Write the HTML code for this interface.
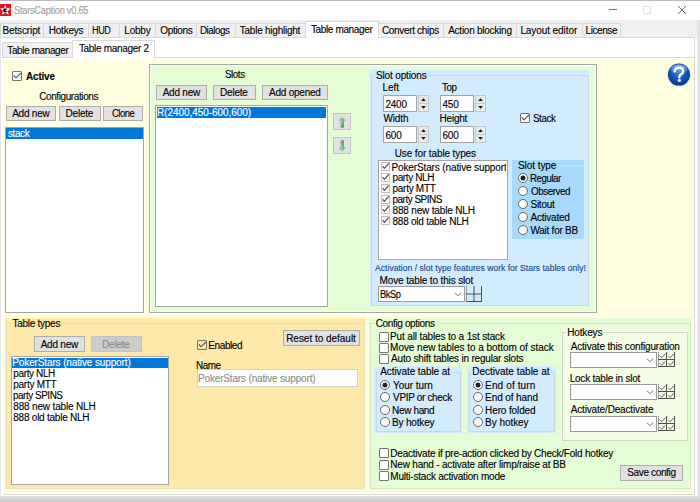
<!DOCTYPE html>
<html><head><meta charset="utf-8"><style>
html,body{margin:0;padding:0;width:700px;height:502px;overflow:hidden;background:#fff;}
body{position:relative;font-family:"Liberation Sans",sans-serif;font-size:10.0px;color:#000;}
.a{position:absolute;box-sizing:border-box;}
.t{position:absolute;white-space:nowrap;line-height:12px;-webkit-text-stroke:0.12px currentColor;}
svg.a{overflow:visible}
</style></head><body>
<div class="a" style="left:0px;top:0px;width:700px;height:1px;background:#bcbcbc;"></div>
<svg class="a" style="left:0;top:0" width="12" height="17"><rect x="0" y="4" width="11" height="12" fill="#e5141c"/><path d="M5.30 4.60 L6.77 8.18 L10.63 8.47 L7.68 10.97 L8.59 14.73 L5.30 12.70 L2.01 14.73 L2.92 10.97 L-0.03 8.47 L3.83 8.18Z" fill="#fff"/><circle cx="5.2" cy="10.4" r="2.1" fill="#111"/><rect x="5.6" y="9.8" width="1.8" height="1.1" fill="#fff"/></svg>
<div class="t" style="left:14px;top:4px;font-size:10.5px;color:#a0a0a0;letter-spacing:-0.3px;transform:scaleX(0.885);transform-origin:0 0;">StarsCaption v0.65</div>
<div class="a" style="left:609px;top:9px;width:8px;height:1px;background:#707070;"></div>
<div class="a" style="left:643px;top:6px;width:8px;height:8px;box-shadow:inset 0 0 0 1px #e0e0e0;"></div>
<svg class="a" style="left:677px;top:5px" width="10" height="10"><path d="M1 1 L9 9 M9 1 L1 9" stroke="#6a6a6a" stroke-width="1"/></svg>
<div class="a" style="left:0px;top:20px;width:700px;height:17px;background:#f0f0f0;"></div>
<div class="a" style="left:697px;top:20px;width:3px;height:482px;background:#e4e4e4;"></div>
<div class="a" style="left:0px;top:20px;width:1px;height:482px;background:#e6e6e6;"></div>
<div class="a" style="left:1px;top:37px;width:696px;height:460px;background:#ffffff;"></div>
<div class="a" style="left:1px;top:37px;width:694px;height:1px;background:#d9d9d9;"></div>
<div class="a" style="left:694px;top:37px;width:1px;height:458px;background:#d9d9d9;"></div>
<div class="a" style="left:0px;top:23px;width:44px;height:15px;background:#f0f0f0;box-shadow:inset 0 0 0 1px #d9d9d9;"></div>
<div class="t" style="left:2.4px;top:25px;letter-spacing:-0.112px;">Betscript</div>
<div class="a" style="left:43px;top:23px;width:46px;height:15px;background:#f0f0f0;box-shadow:inset 0 0 0 1px #d9d9d9;"></div>
<div class="t" style="left:48.8px;top:25px;letter-spacing:-0.233px;">Hotkeys</div>
<div class="a" style="left:88px;top:23px;width:32px;height:15px;background:#f0f0f0;box-shadow:inset 0 0 0 1px #d9d9d9;"></div>
<div class="t" style="left:91.69px;top:25px;transform:scaleX(0.9104);transform-origin:0 0;letter-spacing:-0.45px;">HUD</div>
<div class="a" style="left:119px;top:23px;width:37px;height:15px;background:#f0f0f0;box-shadow:inset 0 0 0 1px #d9d9d9;"></div>
<div class="t" style="left:124.3px;top:25px;letter-spacing:-0.225px;">Lobby</div>
<div class="a" style="left:155px;top:23px;width:42px;height:15px;background:#f0f0f0;box-shadow:inset 0 0 0 1px #d9d9d9;"></div>
<div class="t" style="left:160.3px;top:25px;letter-spacing:-0.333px;">Options</div>
<div class="a" style="left:196px;top:23px;width:40px;height:15px;background:#f0f0f0;box-shadow:inset 0 0 0 1px #d9d9d9;"></div>
<div class="t" style="left:200.42px;top:25px;transform:scaleX(0.9761);transform-origin:0 0;letter-spacing:-0.45px;">Dialogs</div>
<div class="a" style="left:235px;top:23px;width:71px;height:15px;background:#f0f0f0;box-shadow:inset 0 0 0 1px #d9d9d9;"></div>
<div class="t" style="left:239.8px;top:25px;letter-spacing:-0.243px;">Table highlight</div>
<div class="a" style="left:378px;top:23px;width:66px;height:15px;background:#f0f0f0;box-shadow:inset 0 0 0 1px #d9d9d9;"></div>
<div class="t" style="left:381.9px;top:25px;letter-spacing:-0.325px;">Convert chips</div>
<div class="a" style="left:443px;top:23px;width:74px;height:15px;background:#f0f0f0;box-shadow:inset 0 0 0 1px #d9d9d9;"></div>
<div class="t" style="left:448.2px;top:25px;letter-spacing:-0.25px;">Action blocking</div>
<div class="a" style="left:516px;top:23px;width:67px;height:15px;background:#f0f0f0;box-shadow:inset 0 0 0 1px #d9d9d9;"></div>
<div class="t" style="left:520.4px;top:25px;letter-spacing:-0.083px;">Layout editor</div>
<div class="a" style="left:582px;top:23px;width:39px;height:15px;background:#f0f0f0;box-shadow:inset 0 0 0 1px #d9d9d9;"></div>
<div class="t" style="left:585.6px;top:25px;letter-spacing:-0.433px;">License</div>
<div class="a" style="left:305px;top:21px;width:74px;height:17px;background:#ffffff;box-shadow:inset 0 0 0 1px #d9d9d9;"></div>
<div class="a" style="left:306px;top:37px;width:72px;height:2px;background:#ffffff;"></div>
<div class="t" style="left:310.9px;top:24px;letter-spacing:-0.358px;">Table manager</div>
<div class="a" style="left:2px;top:42px;width:71px;height:16px;background:#f0f0f0;box-shadow:inset 0 0 0 1px #d9d9d9;"></div>
<div class="t" style="left:7.3px;top:45px;letter-spacing:-0.392px;">Table manager</div>
<div class="a" style="left:72px;top:40px;width:83px;height:18px;background:#ffffff;box-shadow:inset 0 0 0 1px #d9d9d9;"></div>
<div class="t" style="left:78.9px;top:43px;letter-spacing:-0.307px;">Table manager 2</div>
<div class="a" style="left:2px;top:57px;width:693px;height:438px;background:#ffffff;box-shadow:inset 0 0 0 1px #d9d9d9;"></div>
<div class="a" style="left:2px;top:58px;width:1px;height:437px;background:#ffffff;"></div>
<div class="a" style="left:73px;top:57px;width:81px;height:2px;background:#ffffff;"></div>
<div class="a" style="left:3px;top:59px;width:691px;height:434px;background:#ffffe0;"></div>
<div class="a" style="left:0px;top:496px;width:700px;height:6px;background:linear-gradient(#e8e8e8,#d8d8d8 30%,#c9c9c9);"></div>
<svg class="a" style="left:667px;top:63px" width="24" height="24"><defs><radialGradient id="hg" cx="50%" cy="40%" r="62%"><stop offset="0" stop-color="#2f7ad8"/><stop offset="0.55" stop-color="#1456b8"/><stop offset="0.85" stop-color="#0b3f96"/><stop offset="1" stop-color="#0a3580"/></radialGradient><linearGradient id="hh" x1="0" x2="0" y1="0" y2="1"><stop offset="0" stop-color="#fff" stop-opacity="0.55"/><stop offset="1" stop-color="#fff" stop-opacity="0"/></linearGradient></defs><circle cx="12" cy="12" r="11.8" fill="#a8d6f4" opacity="0.55"/><circle cx="12" cy="11.6" r="11" fill="url(#hg)"/><ellipse cx="12" cy="6.6" rx="8.2" ry="5.2" fill="url(#hh)"/><path d="M7.7 8.3 Q8.1 4.7 12 4.7 Q16.1 4.7 16.1 8 Q16.1 10.3 13.6 11.6 Q12.3 12.3 12.3 14.3" stroke="#fff" stroke-width="2.5" fill="none" stroke-linecap="round"/><circle cx="12.3" cy="17.4" r="1.6" fill="#f4faff"/></svg>
<div class="a" style="left:12px;top:71px;width:10px;height:10px;background:#fff;box-shadow:inset 0 0 0 1px #737373;border-radius:1.5px;"></div>
<svg class="a" style="left:12px;top:71px" width="10" height="10"><path d="M1.8 4.4 L4 6.8 L9 1.9" fill="none" stroke="#4a4a4a" stroke-width="1.05"/></svg>
<div class="t" style="left:26.1px;top:71px;letter-spacing:-0.22px;font-weight:bold;">Active</div>
<div class="t" style="left:39.2px;top:91px;letter-spacing:-0.4px;">Configurations</div>
<div class="a" style="left:6px;top:106px;width:50px;height:15px;background:#e1e1e1;box-shadow:inset 0 0 0 1px #adadad;"></div>
<div class="t" style="left:12.15px;top:108px;letter-spacing:-0.217px;">Add new</div>
<div class="a" style="left:59px;top:106px;width:42px;height:15px;background:#e1e1e1;box-shadow:inset 0 0 0 1px #adadad;"></div>
<div class="t" style="left:65.6px;top:108px;letter-spacing:-0.24px;">Delete</div>
<div class="a" style="left:103px;top:106px;width:40px;height:15px;background:#e1e1e1;box-shadow:inset 0 0 0 1px #adadad;"></div>
<div class="t" style="left:111.65px;top:108px;transform:scaleX(0.938);transform-origin:0 0;letter-spacing:-0.45px;">Clone</div>
<div class="a" style="left:5px;top:127px;width:139px;height:186px;background:#fff;box-shadow:inset 0 0 0 1px #a2a4aa;"></div>
<div class="a" style="left:6px;top:128px;width:137px;height:11px;background:#0078d7;"></div>
<div class="t" style="left:7.9px;top:128px;color:#fff;letter-spacing:-0.375px;">stack</div>
<div class="a" style="left:149px;top:64px;width:448px;height:249px;background:#e4fdd5;box-shadow:inset 0 0 0 1px #a8a8a8,inset 0 0 0 2px #f4fdee;"></div>
<div class="t" style="left:225.4px;top:69px;transform:scaleX(0.9802);transform-origin:0 0;letter-spacing:-0.45px;">Slots</div>
<div class="a" style="left:156px;top:85px;width:51px;height:15px;background:#e1e1e1;box-shadow:inset 0 0 0 1px #adadad;"></div>
<div class="t" style="left:162.65px;top:87px;letter-spacing:-0.217px;">Add new</div>
<div class="a" style="left:213px;top:85px;width:43px;height:15px;background:#e1e1e1;box-shadow:inset 0 0 0 1px #adadad;"></div>
<div class="t" style="left:220.1px;top:87px;letter-spacing:-0.24px;">Delete</div>
<div class="a" style="left:262px;top:85px;width:66px;height:15px;background:#e1e1e1;box-shadow:inset 0 0 0 1px #adadad;"></div>
<div class="t" style="left:269.05px;top:87px;letter-spacing:-0.233px;">Add opened</div>
<div class="a" style="left:155px;top:105px;width:173px;height:202px;background:#fff;box-shadow:inset 0 0 0 1px #a2a4aa;"></div>
<div class="a" style="left:157px;top:107px;width:169px;height:11px;background:#0078d7;"></div>
<div class="t" style="left:157px;top:107px;color:#fff;letter-spacing:-0.056px;">R(2400,450-600,600)</div>
<div class="a" style="left:333px;top:113px;width:18px;height:17px;background:#e1e1e1;box-shadow:inset 0 0 0 1px #c4c4c4;"></div>
<div class="a" style="left:333px;top:137px;width:18px;height:17px;background:#e1e1e1;box-shadow:inset 0 0 0 1px #c4c4c4;"></div>
<svg class="a" style="left:333px;top:113px" width="18" height="41"><defs><linearGradient id="ag" x1="0" x2="1"><stop offset="0" stop-color="#2d8a3a"/><stop offset="0.42" stop-color="#8ed49a"/><stop offset="1" stop-color="#2a7f35"/></linearGradient><linearGradient id="av" x1="0" x2="0" y1="0" y2="1"><stop offset="0" stop-color="#fff" stop-opacity="0.15"/><stop offset="1" stop-color="#0a4a12" stop-opacity="0.35"/></linearGradient><linearGradient id="av2" x1="0" x2="0" y1="1" y2="0"><stop offset="0" stop-color="#fff" stop-opacity="0.1"/><stop offset="1" stop-color="#0a4a12" stop-opacity="0.3"/></linearGradient></defs><path d="M9 3.8 L12.4 7.6 L10.9 7.6 L10.9 14.2 Q9.3 15.4 7.7 14.2 L7.7 7.6 L5.9 7.6Z" fill="url(#ag)"/><path d="M9 3.8 L12.4 7.6 L10.9 7.6 L10.9 14.2 Q9.3 15.4 7.7 14.2 L7.7 7.6 L5.9 7.6Z" fill="url(#av)"/><path d="M9 38.6 L12.4 34.8 L10.9 34.8 L10.9 27.6 Q9.3 26.8 7.7 27.6 L7.7 34.8 L5.9 34.8Z" fill="url(#ag)"/><path d="M9 38.6 L12.4 34.8 L10.9 34.8 L10.9 27.6 Q9.3 26.8 7.7 27.6 L7.7 34.8 L5.9 34.8Z" fill="url(#av2)"/></svg>
<div class="a" style="left:370px;top:70px;width:219px;height:236px;background:#d2ebfd;"></div>
<div class="a" style="left:371px;top:75px;width:218px;height:231px;box-shadow:inset 0 0 0 1px #c4d8e6;"></div>
<div class="t" style="left:376px;top:70px;letter-spacing:-0.145px;background:#d2ebfd;padding:0 1px;margin-left:-1px;">Slot options</div>
<div class="t" style="left:382.4px;top:82px;letter-spacing:-0.033px;">Left</div>
<div class="t" style="left:441.5px;top:82px;transform:scaleX(0.9868);transform-origin:0 0;letter-spacing:-0.45px;">Top</div>
<div class="a" style="left:383px;top:95px;width:34px;height:17px;background:#fff;box-shadow:inset 0 0 0 1px #a3a3a3;"></div>
<div class="t" style="left:385.4px;top:99px;letter-spacing:-0.2px;">2400</div>
<div class="a" style="left:418px;top:95px;width:11px;height:9.0px;background:#e9e9e9;box-shadow:inset 0 0 0 1px #c6c6c6;"></div>
<div class="a" style="left:418px;top:103.0px;width:11px;height:9.0px;background:#e9e9e9;box-shadow:inset 0 0 0 1px #c6c6c6;"></div>
<svg class="a" style="left:0;top:0" width="700" height="502"><path d="M421.1 100.9 L423.5 98.3 L425.9 100.9Z M421.1 106.1 L423.5 108.7 L425.9 106.1Z" fill="#1a1a1a"/></svg>
<div class="a" style="left:440px;top:95px;width:34px;height:17px;background:#fff;box-shadow:inset 0 0 0 1px #a3a3a3;"></div>
<div class="t" style="left:442.4px;top:99px;letter-spacing:-0.1px;">450</div>
<div class="a" style="left:475px;top:95px;width:11px;height:9.0px;background:#e9e9e9;box-shadow:inset 0 0 0 1px #c6c6c6;"></div>
<div class="a" style="left:475px;top:103.0px;width:11px;height:9.0px;background:#e9e9e9;box-shadow:inset 0 0 0 1px #c6c6c6;"></div>
<svg class="a" style="left:0;top:0" width="700" height="502"><path d="M478.1 100.9 L480.5 98.3 L482.9 100.9Z M478.1 106.1 L480.5 108.7 L482.9 106.1Z" fill="#1a1a1a"/></svg>
<div class="t" style="left:383.4px;top:113px;letter-spacing:-0.1px;">Width</div>
<div class="t" style="left:439.6px;top:113px;letter-spacing:-0.22px;">Height</div>
<div class="a" style="left:383px;top:126px;width:34px;height:17px;background:#fff;box-shadow:inset 0 0 0 1px #a3a3a3;"></div>
<div class="t" style="left:385.4px;top:130px;letter-spacing:-0.1px;">600</div>
<div class="a" style="left:418px;top:126px;width:11px;height:9.0px;background:#e9e9e9;box-shadow:inset 0 0 0 1px #c6c6c6;"></div>
<div class="a" style="left:418px;top:134.0px;width:11px;height:9.0px;background:#e9e9e9;box-shadow:inset 0 0 0 1px #c6c6c6;"></div>
<svg class="a" style="left:0;top:0" width="700" height="502"><path d="M421.1 131.9 L423.5 129.3 L425.9 131.9Z M421.1 137.1 L423.5 139.7 L425.9 137.1Z" fill="#1a1a1a"/></svg>
<div class="a" style="left:440px;top:126px;width:34px;height:17px;background:#fff;box-shadow:inset 0 0 0 1px #a3a3a3;"></div>
<div class="t" style="left:442.4px;top:130px;letter-spacing:-0.1px;">600</div>
<div class="a" style="left:475px;top:126px;width:11px;height:9.0px;background:#e9e9e9;box-shadow:inset 0 0 0 1px #c6c6c6;"></div>
<div class="a" style="left:475px;top:134.0px;width:11px;height:9.0px;background:#e9e9e9;box-shadow:inset 0 0 0 1px #c6c6c6;"></div>
<svg class="a" style="left:0;top:0" width="700" height="502"><path d="M478.1 131.9 L480.5 129.3 L482.9 131.9Z M478.1 137.1 L480.5 139.7 L482.9 137.1Z" fill="#1a1a1a"/></svg>
<div class="a" style="left:520px;top:113px;width:10px;height:10px;background:#fff;box-shadow:inset 0 0 0 1px #737373;border-radius:1.5px;"></div>
<svg class="a" style="left:520px;top:113px" width="10" height="10"><path d="M1.8 4.4 L4 6.8 L9 1.9" fill="none" stroke="#4a4a4a" stroke-width="1.05"/></svg>
<div class="t" style="left:532.9px;top:113px;transform:scaleX(0.9828);transform-origin:0 0;letter-spacing:-0.45px;">Stack</div>
<div class="t" style="left:394.7px;top:148px;letter-spacing:-0.111px;">Use for table types</div>
<div class="a" style="left:378px;top:160px;width:130px;height:100px;background:#fff;box-shadow:inset 0 0 0 1px #a2a4aa;"></div>
<div class="a" style="left:379px;top:161px;width:127px;height:98px;overflow:hidden">
<svg class="a" style="left:2px;top:1px" width="9" height="9"><rect x="0.5" y="0.5" width="8" height="8" fill="none" stroke="#c0c0c0" stroke-width="1"/><path d="M1.6 4.2 L3.3 6.3 L7.8 1.4" fill="none" stroke="#444" stroke-width="1.1"/></svg>
<div class="t" style="left:12.5px;top:1px;letter-spacing:-0.127px">PokerStars (native support)</div>
<svg class="a" style="left:2px;top:12px" width="9" height="9"><rect x="0.5" y="0.5" width="8" height="8" fill="none" stroke="#c0c0c0" stroke-width="1"/><path d="M1.6 4.2 L3.3 6.3 L7.8 1.4" fill="none" stroke="#444" stroke-width="1.1"/></svg>
<div class="t" style="left:13.5px;top:11px;letter-spacing:-0.375px">party NLH</div>
<svg class="a" style="left:2px;top:23px" width="9" height="9"><rect x="0.5" y="0.5" width="8" height="8" fill="none" stroke="#c0c0c0" stroke-width="1"/><path d="M1.6 4.2 L3.3 6.3 L7.8 1.4" fill="none" stroke="#444" stroke-width="1.1"/></svg>
<div class="t" style="left:13.5px;top:22px;letter-spacing:-0.275px">party MTT</div>
<svg class="a" style="left:2px;top:34px" width="9" height="9"><rect x="0.5" y="0.5" width="8" height="8" fill="none" stroke="#c0c0c0" stroke-width="1"/><path d="M1.6 4.2 L3.3 6.3 L7.8 1.4" fill="none" stroke="#444" stroke-width="1.1"/></svg>
<div class="t" style="left:13.5px;top:33px;letter-spacing:-0.51px">party SPINS</div>
<svg class="a" style="left:2px;top:44px" width="9" height="9"><rect x="0.5" y="0.5" width="8" height="8" fill="none" stroke="#c0c0c0" stroke-width="1"/><path d="M1.6 4.2 L3.3 6.3 L7.8 1.4" fill="none" stroke="#444" stroke-width="1.1"/></svg>
<div class="t" style="left:13.5px;top:44px;letter-spacing:-0.169px">888 new table NLH</div>
<svg class="a" style="left:2px;top:55px" width="9" height="9"><rect x="0.5" y="0.5" width="8" height="8" fill="none" stroke="#c0c0c0" stroke-width="1"/><path d="M1.6 4.2 L3.3 6.3 L7.8 1.4" fill="none" stroke="#444" stroke-width="1.1"/></svg>
<div class="t" style="left:13.5px;top:55px;letter-spacing:-0.237px">888 old table NLH</div>
</div>
<div class="a" style="left:512px;top:160px;width:72px;height:79px;background:#a8d8fb;"></div>
<div class="a" style="left:513px;top:165px;width:70px;height:1px;background:#c6e2f6;"></div>
<div class="t" style="left:517.9px;top:160px;letter-spacing:-0.05px;background:#a8d8fb;padding:0 1px;margin-left:-1px;">Slot type</div>
<svg class="a" style="left:518px;top:172.8px" width="10" height="10"><circle cx="5.0" cy="5.0" r="4.5" fill="#fff" stroke="#666" stroke-width="1"/><circle cx="5.0" cy="5.0" r="2.5" fill="#222"/></svg>
<div class="t" style="left:529.53px;top:173px;transform:scaleX(0.9681);transform-origin:0 0;letter-spacing:-0.45px;">Regular</div>
<svg class="a" style="left:518px;top:185.8px" width="10" height="10"><circle cx="5.0" cy="5.0" r="4.5" fill="#fff" stroke="#666" stroke-width="1"/></svg>
<div class="t" style="left:530.5px;top:186px;transform:scaleX(0.9837);transform-origin:0 0;letter-spacing:-0.45px;">Observed</div>
<svg class="a" style="left:518px;top:198.9px" width="10" height="10"><circle cx="5.0" cy="5.0" r="4.5" fill="#fff" stroke="#666" stroke-width="1"/></svg>
<div class="t" style="left:530.5px;top:199px;letter-spacing:-0.26px;">Sitout</div>
<svg class="a" style="left:518px;top:211.9px" width="10" height="10"><circle cx="5.0" cy="5.0" r="4.5" fill="#fff" stroke="#666" stroke-width="1"/></svg>
<div class="t" style="left:530.5px;top:212px;letter-spacing:-0.225px;">Activated</div>
<svg class="a" style="left:518px;top:224.9px" width="10" height="10"><circle cx="5.0" cy="5.0" r="4.5" fill="#fff" stroke="#666" stroke-width="1"/></svg>
<div class="t" style="left:530.5px;top:225px;letter-spacing:-0.26px;">Wait for BB</div>
<div class="t" style="left:375.1px;top:262px;font-size:8.5px;color:#174b8e;letter-spacing:0.034px;">Activation / slot type features work for Stars tables only!</div>
<div class="t" style="left:379.6px;top:275px;letter-spacing:-0.136px;">Move table to this slot</div>
<div class="a" style="left:378px;top:286px;width:87px;height:16px;background:#fff;box-shadow:inset 0 0 0 1px #9a9a9a;"></div>
<div class="t" style="left:380.07px;top:289px;transform:scaleX(0.933);transform-origin:0 0;letter-spacing:-0.45px;">BkSp</div>
<svg class="a" style="left:0;top:0" width="700" height="502"><path d="M455 292.8 L458 295.8 L461 292.8" fill="none" stroke="#6a6a6a" stroke-width="1"/></svg>
<svg class="a" style="left:466px;top:286px" width="16" height="16"><path d="M0.5 0 V16" stroke="#9a9a9a" stroke-width="1" fill="none"/><path d="M8.0 0 V16 M15.5 0 V16 M0 8.0 H16 M0 15.5 H16" stroke="#505050" stroke-width="1" fill="none"/></svg>
<div class="a" style="left:5px;top:318px;width:360px;height:171px;background:#fee8aa;"></div>
<div class="a" style="left:6px;top:323px;width:359px;height:166px;box-shadow:inset 0 0 0 1px #e9dcc0;"></div>
<div class="t" style="left:12.4px;top:318px;letter-spacing:-0.26px;background:#fee8aa;padding:0 1px;margin-left:-1px;">Table types</div>
<div class="a" style="left:34px;top:336px;width:51px;height:16px;background:#e1e1e1;box-shadow:inset 0 0 0 1px #adadad;"></div>
<div class="t" style="left:40.65px;top:339px;letter-spacing:-0.217px;">Add new</div>
<div class="a" style="left:91px;top:336px;width:51px;height:16px;background:#cccccc;box-shadow:inset 0 0 0 1px #c2c2c2;"></div>
<div class="t" style="left:102.1px;top:339px;color:#8a8a8a;letter-spacing:-0.24px;">Delete</div>
<div class="a" style="left:11px;top:356px;width:158px;height:129px;background:#fff;box-shadow:inset 0 0 0 1px #a2a4aa;"></div>
<div class="a" style="left:12px;top:358px;width:156px;height:10px;background:#0078d7;"></div>
<div class="t" style="left:12.3px;top:357px;color:#fff;letter-spacing:-0.127px;">PokerStars (native support)</div>
<div class="t" style="left:13.3px;top:368px;letter-spacing:-0.375px;">party NLH</div>
<div class="t" style="left:13.3px;top:379px;letter-spacing:-0.275px;">party MTT</div>
<div class="t" style="left:13.3px;top:390px;transform:scaleX(0.9881);transform-origin:0 0;letter-spacing:-0.45px;">party SPINS</div>
<div class="t" style="left:13.3px;top:401px;letter-spacing:-0.169px;">888 new table NLH</div>
<div class="t" style="left:13.3px;top:412px;letter-spacing:-0.237px;">888 old table NLH</div>
<div class="a" style="left:197px;top:340px;width:10px;height:10px;background:#fee8aa;box-shadow:inset 0 0 0 1px #737373;border-radius:1.5px;"></div>
<svg class="a" style="left:197px;top:340px" width="10" height="10"><path d="M1.8 4.4 L4 6.8 L9 1.9" fill="none" stroke="#4a4a4a" stroke-width="1.05"/></svg>
<div class="t" style="left:208.3px;top:340px;letter-spacing:-0.4px;">Enabled</div>
<div class="a" style="left:283px;top:330px;width:77px;height:16px;background:#e1e1e1;box-shadow:inset 0 0 0 1px #adadad;"></div>
<div class="t" style="left:286.15px;top:333px;letter-spacing:-0.02px;">Reset to default</div>
<div class="t" style="left:195.81px;top:360px;transform:scaleX(0.9894);transform-origin:0 0;letter-spacing:-0.45px;">Name</div>
<div class="a" style="left:197px;top:369px;width:161px;height:18px;background:#fff;box-shadow:inset 0 0 0 1px #d4d4d4;"></div>
<div class="t" style="left:198px;top:373px;color:#8c8c8c;letter-spacing:-0.158px;">PokerStars (native support)</div>
<div class="a" style="left:369px;top:318px;width:322px;height:171px;background:#e4fdd5;"></div>
<div class="a" style="left:370px;top:323px;width:321px;height:166px;box-shadow:inset 0 0 0 1px #d0e6c0;"></div>
<div class="t" style="left:375.7px;top:318px;letter-spacing:-0.354px;background:#e4fdd5;padding:0 1px;margin-left:-1px;">Config options</div>
<div class="a" style="left:379px;top:332px;width:10px;height:10px;background:#fff;box-shadow:inset 0 0 0 1px #737373;border-radius:1.5px;"></div>
<div class="t" style="left:390.1px;top:331px;letter-spacing:-0.146px;">Put all tables to a 1st stack</div>
<div class="a" style="left:379px;top:343px;width:10px;height:10px;background:#fff;box-shadow:inset 0 0 0 1px #737373;border-radius:1.5px;"></div>
<div class="t" style="left:390.1px;top:342px;letter-spacing:-0.043px;">Move new tables to a bottom of stack</div>
<div class="a" style="left:379px;top:354px;width:10px;height:10px;background:#fff;box-shadow:inset 0 0 0 1px #737373;border-radius:1.5px;"></div>
<div class="t" style="left:391.1px;top:353px;letter-spacing:-0.197px;">Auto shift tables in regular slots</div>
<div class="a" style="left:374px;top:367px;width:88px;height:66px;background:#d2ebfd;"></div>
<div class="a" style="left:376px;top:372px;width:85px;height:60px;box-shadow:inset 0 0 0 1px #c4d8e6;"></div>
<div class="t" style="left:380.2px;top:366px;letter-spacing:-0.081px;background:#d2ebfd;padding:0 1px;margin-left:-1px;">Activate table at</div>
<svg class="a" style="left:380px;top:380.0px" width="10" height="10"><circle cx="5.0" cy="5.0" r="4.5" fill="#fff" stroke="#666" stroke-width="1"/><circle cx="5.0" cy="5.0" r="2.5" fill="#222"/></svg>
<div class="t" style="left:393.1px;top:380px;letter-spacing:-0.062px;">Your turn</div>
<svg class="a" style="left:380px;top:392.3px" width="10" height="10"><circle cx="5.0" cy="5.0" r="4.5" fill="#fff" stroke="#666" stroke-width="1"/></svg>
<div class="t" style="left:393.1px;top:392px;letter-spacing:-0.342px;">VPIP or check</div>
<svg class="a" style="left:380px;top:404.6px" width="10" height="10"><circle cx="5.0" cy="5.0" r="4.5" fill="#fff" stroke="#666" stroke-width="1"/></svg>
<div class="t" style="left:392.1px;top:405px;letter-spacing:-0.357px;">New hand</div>
<svg class="a" style="left:380px;top:416.9px" width="10" height="10"><circle cx="5.0" cy="5.0" r="4.5" fill="#fff" stroke="#666" stroke-width="1"/></svg>
<div class="t" style="left:392.1px;top:417px;letter-spacing:-0.188px;">By hotkey</div>
<div class="a" style="left:467px;top:367px;width:89px;height:66px;background:#d2ebfd;"></div>
<div class="a" style="left:469px;top:372px;width:86px;height:60px;box-shadow:inset 0 0 0 1px #c4d8e6;"></div>
<div class="t" style="left:472.2px;top:366px;letter-spacing:0.006px;background:#d2ebfd;padding:0 1px;margin-left:-1px;">Dectivate table at</div>
<svg class="a" style="left:473px;top:380.0px" width="10" height="10"><circle cx="5.0" cy="5.0" r="4.5" fill="#fff" stroke="#666" stroke-width="1"/><circle cx="5.0" cy="5.0" r="2.5" fill="#222"/></svg>
<div class="t" style="left:485.1px;top:380px;letter-spacing:0.13px;">End of turn</div>
<svg class="a" style="left:473px;top:392.3px" width="10" height="10"><circle cx="5.0" cy="5.0" r="4.5" fill="#fff" stroke="#666" stroke-width="1"/></svg>
<div class="t" style="left:485.1px;top:392px;letter-spacing:-0.1px;">End of hand</div>
<svg class="a" style="left:473px;top:404.6px" width="10" height="10"><circle cx="5.0" cy="5.0" r="4.5" fill="#fff" stroke="#666" stroke-width="1"/></svg>
<div class="t" style="left:485.1px;top:405px;letter-spacing:-0.12px;">Hero folded</div>
<svg class="a" style="left:473px;top:416.9px" width="10" height="10"><circle cx="5.0" cy="5.0" r="4.5" fill="#fff" stroke="#666" stroke-width="1"/></svg>
<div class="t" style="left:485.1px;top:417px;letter-spacing:-0.05px;">By hotkey</div>
<div class="a" style="left:562px;top:327px;width:126px;height:114px;background:#f2fde3;"></div>
<div class="a" style="left:562px;top:332px;width:126px;height:109px;box-shadow:inset 0 0 0 1px #cfd8c8;"></div>
<div class="t" style="left:567.3px;top:327px;letter-spacing:-0.167px;background:#f2fde3;padding:0 1px;margin-left:-1px;">Hotkeys</div>
<div class="t" style="left:570.7px;top:341px;letter-spacing:-0.181px;">Activate this configuration</div>
<div class="a" style="left:570px;top:352px;width:87px;height:16px;background:#fff;box-shadow:inset 0 0 0 1px #9a9a9a;"></div>
<svg class="a" style="left:0;top:0" width="700" height="502"><path d="M647 358.8 L650 361.8 L653 358.8" fill="none" stroke="#6a6a6a" stroke-width="1"/></svg>
<svg class="a" style="left:658px;top:352px" width="17" height="15"><path d="M0.5 0 V15" stroke="#9a9a9a" stroke-width="1" fill="none"/><path d="M8.5 0 V15 M16.5 0 V15 M0 7.5 H17 M0 14.5 H17" stroke="#505050" stroke-width="1" fill="none"/><path d="M1.75 3.75 L3.75 5.75 L7.25 1.75" stroke="#555" fill="none" stroke-width="0.9"/><path d="M1.75 11.25 L3.75 13.25 L7.25 9.25" stroke="#555" fill="none" stroke-width="0.9"/><path d="M10.25 3.75 L12.25 5.75 L15.75 1.75" stroke="#555" fill="none" stroke-width="0.9"/><path d="M10.25 11.25 L12.25 13.25 L15.75 9.25" stroke="#555" fill="none" stroke-width="0.9"/></svg>
<div class="t" style="left:569.7px;top:373px;letter-spacing:-0.224px;">Lock table in slot</div>
<div class="a" style="left:570px;top:384px;width:87px;height:16px;background:#fff;box-shadow:inset 0 0 0 1px #9a9a9a;"></div>
<svg class="a" style="left:0;top:0" width="700" height="502"><path d="M647 390.8 L650 393.8 L653 390.8" fill="none" stroke="#6a6a6a" stroke-width="1"/></svg>
<svg class="a" style="left:658px;top:384px" width="17" height="15"><path d="M0.5 0 V15" stroke="#9a9a9a" stroke-width="1" fill="none"/><path d="M8.5 0 V15 M16.5 0 V15 M0 7.5 H17 M0 14.5 H17" stroke="#505050" stroke-width="1" fill="none"/><path d="M1.75 3.75 L3.75 5.75 L7.25 1.75" stroke="#555" fill="none" stroke-width="0.9"/><path d="M1.75 11.25 L3.75 13.25 L7.25 9.25" stroke="#555" fill="none" stroke-width="0.9"/><path d="M10.25 3.75 L12.25 5.75 L15.75 1.75" stroke="#555" fill="none" stroke-width="0.9"/><path d="M10.25 11.25 L12.25 13.25 L15.75 9.25" stroke="#555" fill="none" stroke-width="0.9"/></svg>
<div class="t" style="left:570.7px;top:404px;letter-spacing:-0.156px;">Activate/Deactivate</div>
<div class="a" style="left:570px;top:416px;width:87px;height:16px;background:#fff;box-shadow:inset 0 0 0 1px #9a9a9a;"></div>
<svg class="a" style="left:0;top:0" width="700" height="502"><path d="M647 422.8 L650 425.8 L653 422.8" fill="none" stroke="#6a6a6a" stroke-width="1"/></svg>
<svg class="a" style="left:658px;top:416px" width="17" height="15"><path d="M0.5 0 V15" stroke="#9a9a9a" stroke-width="1" fill="none"/><path d="M8.5 0 V15 M16.5 0 V15 M0 7.5 H17 M0 14.5 H17" stroke="#505050" stroke-width="1" fill="none"/><path d="M1.75 3.75 L3.75 5.75 L7.25 1.75" stroke="#555" fill="none" stroke-width="0.9"/><path d="M1.75 11.25 L3.75 13.25 L7.25 9.25" stroke="#555" fill="none" stroke-width="0.9"/><path d="M10.25 3.75 L12.25 5.75 L15.75 1.75" stroke="#555" fill="none" stroke-width="0.9"/><path d="M10.25 11.25 L12.25 13.25 L15.75 9.25" stroke="#555" fill="none" stroke-width="0.9"/></svg>
<div class="a" style="left:379px;top:448px;width:10px;height:10px;background:#fff;box-shadow:inset 0 0 0 1px #737373;border-radius:1.5px;"></div>
<div class="t" style="left:390.3px;top:448px;letter-spacing:-0.221px;">Deactivate if pre-action clicked by Check/Fold hotkey</div>
<div class="a" style="left:379px;top:460px;width:10px;height:10px;background:#fff;box-shadow:inset 0 0 0 1px #737373;border-radius:1.5px;"></div>
<div class="t" style="left:390.3px;top:459px;letter-spacing:-0.202px;">New hand - activate after limp/raise at BB</div>
<div class="a" style="left:379px;top:471px;width:10px;height:10px;background:#fff;box-shadow:inset 0 0 0 1px #737373;border-radius:1.5px;"></div>
<div class="t" style="left:390.3px;top:471px;letter-spacing:-0.215px;">Multi-stack activation mode</div>
<div class="a" style="left:620px;top:465px;width:63px;height:16px;background:#e1e1e1;box-shadow:inset 0 0 0 1px #adadad;"></div>
<div class="t" style="left:627.3px;top:467px;letter-spacing:-0.36px;">Save config</div>
</body></html>
